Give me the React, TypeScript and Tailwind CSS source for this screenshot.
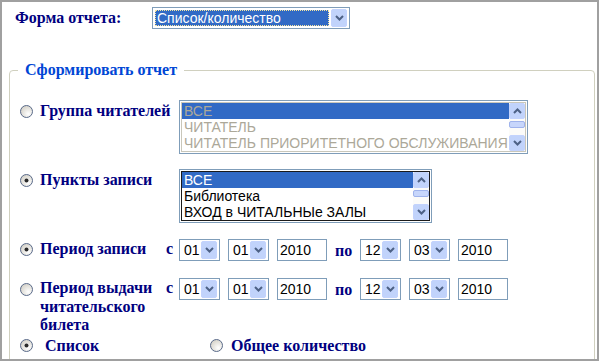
import React from "react";

const serif = { fontFamily: '"Liberation Serif", "Times New Roman", serif' };
const sans = { fontFamily: '"Liberation Sans", Arial, sans-serif' };

function Chevron({ up = false }: { up?: boolean }) {
  return (
    <svg width="9" height="6" viewBox="0 0 9 6">
      {up ? (
        <path d="M1 5 L4.5 1.5 L8 5" fill="none" stroke="#4d6185" strokeWidth="2" />
      ) : (
        <path d="M1 1 L4.5 4.5 L8 1" fill="none" stroke="#4d6185" strokeWidth="2" />
      )}
    </svg>
  );
}

function Radio({ checked = false }: { checked?: boolean }) {
  return (
    <svg width="13" height="13" viewBox="0 0 13 13" className="shrink-0">
      <defs>
        <radialGradient id={checked ? "rg1" : "rg0"} cx="0.65" cy="0.7" r="0.7">
          <stop offset="0" stopColor="#ffffff" />
          <stop offset="1" stopColor="#d6d3ca" />
        </radialGradient>
      </defs>
      <circle cx="6.5" cy="6.5" r="6" fill={`url(#${checked ? "rg1" : "rg0"})`} stroke="#5a6b8a" strokeWidth="1" />
      {checked && <circle cx="6.5" cy="6.5" r="2" fill="#2a2a2a" />}
    </svg>
  );
}

function DropBtn() {
  return (
    <div className="w-[16px] h-full flex items-center justify-center rounded-[2px] border border-[#c3d3fd] bg-[#c1d3fb]">
      <Chevron />
    </div>
  );
}

function SmallSelect({ value }: { value: string }) {
  return (
    <div className="flex h-[22px] w-[41px] border border-[#7f9db9] bg-white p-[1px]">
      <div className="flex-1 pl-[3px] text-[14px] leading-[18px] text-black" style={sans}>
        {value}
      </div>
      <div className="pr-[1px] h-full">
        <DropBtn />
      </div>
    </div>
  );
}

function TextInput({ value }: { value: string }) {
  return (
    <div className="h-[22px] w-[50px] border border-[#7f9db9] bg-white pl-[2px] text-[14px] leading-[20px] text-black" style={sans}>
      {value}
    </div>
  );
}

function Scrollbar() {
  return (
    <div className="w-[16px] h-[48px] flex flex-col bg-[#fbfbf9]">
      <div className="h-[16px] flex items-center justify-center rounded-[2px] border border-[#c3d3fd] bg-[#c1d3fb]">
        <Chevron up />
      </div>
      <div className="mt-[2px] h-[7px] rounded-[2px] border border-[#9fb3ec] bg-[#c7d6fb]" />
      <div className="flex-1" />
      <div className="h-[16px] flex items-center justify-center rounded-[2px] border border-[#c3d3fd] bg-[#c1d3fb]">
        <Chevron />
      </div>
    </div>
  );
}

function ListBox({
  items,
  width,
  disabled = false,
}: {
  items: string[];
  width: string;
  disabled?: boolean;
}) {
  return (
    <div className={`${width} h-[54px] border border-[#7f9db9] bg-white p-[1px] shrink-0`}>
      <div className={`flex h-[50px] border ${disabled ? "border-[#c9c7ba]" : "border-[#1a1a1a]"}`}>
        <div className="flex-1 overflow-hidden text-[14px] leading-[16px] whitespace-nowrap" style={sans}>
          {items.map((it, i) => (
            <div
              key={i}
              className={`h-[16px] pl-[2px] ${
                i === 0 ? "bg-[#316ac5]" : ""
              } ${disabled ? "text-[#aca899]" : i === 0 ? "text-white" : "text-black"}`}
            >
              {it}
            </div>
          ))}
        </div>
        <Scrollbar />
      </div>
    </div>
  );
}

function DateRange() {
  return (
    <div className="flex items-start">
      <div className="w-[13px] mt-[1px] text-[16px] font-bold text-[#000080] leading-[18px]" style={serif}>
        с
      </div>
      <div className="flex items-center gap-[8px]">
        <SmallSelect value="01" />
        <SmallSelect value="01" />
        <TextInput value="2010" />
      </div>
      <div className="w-[33px] pl-[8px] mt-[3px] text-[16px] font-bold text-[#000080] leading-[18px]" style={serif}>
        по
      </div>
      <div className="flex items-center gap-[8px]">
        <SmallSelect value="12" />
        <SmallSelect value="03" />
        <TextInput value="2010" />
      </div>
    </div>
  );
}

export default function App() {
  return (
    <div className="w-[599px] h-[361px] border-2 border-[#a0a0a0] bg-white overflow-hidden">
      {/* top row */}
      <div className="flex items-center pl-[13px] pt-[5px]">
        <div className="w-[137px] text-[16px] font-bold text-[#000080] leading-[18px]" style={serif}>
          Форма отчета:
        </div>
        <div className="flex h-[22px] w-[198px] border border-[#7f9db9] bg-white p-[1px]">
          <div className="flex-1 p-[1px]">
            <div
              className="h-full border border-dotted border-[#f5e6a0] bg-[#316ac5] pl-[1px] text-[14px] leading-[15px] text-white"
              style={sans}
            >
              Список/количество
            </div>
          </div>
          <div className="pl-[1px] pr-[1px] h-full">
            <DropBtn />
          </div>
        </div>
      </div>

      {/* fieldset */}
      <fieldset className="mt-[32px] ml-[7px] mr-[2px] border border-[#d0d0bf] rounded-[4px] pb-[20px]">
        <legend className="ml-[8px] px-[7px] text-[16px] font-bold text-[#0046d5] leading-[18px]" style={serif}>
          Сформировать отчет
        </legend>

        <div className="pl-[10px] pt-[21px] flex flex-col">
          {/* group readers */}
          <div className="flex items-start">
            <div className="mt-[5px]">
              <Radio />
            </div>
            <div
              className="ml-[7px] w-[139px] mt-[2px] text-[16px] font-bold text-[#000080] leading-[18px] whitespace-nowrap"
              style={serif}
            >
              Группа читателей
            </div>
            <ListBox
              width="w-[349px]"
              disabled
              items={["ВСЕ", "ЧИТАТЕЛЬ", "ЧИТАТЕЛЬ ПРИОРИТЕТНОГО ОБСЛУЖИВАНИЯ"]}
            />
          </div>

          {/* points */}
          <div className="flex items-start mt-[15px]">
            <div className="mt-[5px]">
              <Radio checked />
            </div>
            <div
              className="ml-[7px] w-[139px] mt-[2px] text-[16px] font-bold text-[#000080] leading-[18px] whitespace-nowrap"
              style={serif}
            >
              Пункты записи
            </div>
            <ListBox width="w-[253px]" items={["ВСЕ", "Библиотека", "ВХОД в ЧИТАЛЬНЫe ЗАЛЫ"]} />
          </div>

          {/* period record */}
          <div className="flex items-start mt-[16px]">
            <div className="mt-[4px]">
              <Radio checked />
            </div>
            <div
              className="ml-[7px] w-[126px] mt-[1px] text-[16px] font-bold text-[#000080] leading-[18px] whitespace-nowrap"
              style={serif}
            >
              Период записи
            </div>
            <DateRange />
          </div>

          {/* period issue */}
          <div className="flex items-start mt-[17px]">
            <div className="mt-[5px]">
              <Radio />
            </div>
            <div
              className="ml-[7px] w-[126px] mt-[1px] text-[16px] font-bold text-[#000080] leading-[18.5px] whitespace-nowrap"
              style={serif}
            >
              Период выдачи
              <br />
              читательского
              <br />
              билета
            </div>
            <DateRange />
          </div>

          {/* bottom */}
          <div className="flex items-center mt-[2px]">
            <Radio checked />
            <div className="ml-[12px] w-[165px] text-[16px] font-bold text-[#000080] leading-[18px]" style={serif}>
              Список
            </div>
            <Radio />
            <div className="ml-[8px] text-[16px] font-bold text-[#000080] leading-[18px]" style={serif}>
              Общее количество
            </div>
          </div>
        </div>
      </fieldset>
    </div>
  );
}
